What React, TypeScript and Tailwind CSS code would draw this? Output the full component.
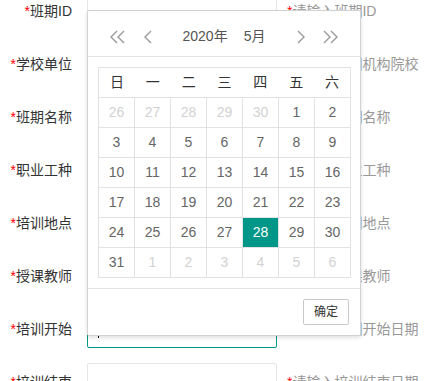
const rows = [
  { label: '班期ID', hint: '请输入班期ID' },
  { label: '学校单位', hint: '请输入培训机构院校' },
  { label: '班期名称', hint: '请输入班期名称' },
  { label: '职业工种', hint: '请输入职业工种' },
  { label: '培训地点', hint: '请输入培训地点' },
  { label: '授课教师', hint: '请输入授课教师' },
  { label: '培训开始', hint: '请输入培训开始日期', focus: true },
  { label: '培训结束', hint: '请输入培训结束日期' },
];

const weekdays = ['日', '一', '二', '三', '四', '五', '六'];

// 2020-05 month view, starts from Sun 26 April
const days: { n: number; muted?: boolean }[] = [
  ...[26, 27, 28, 29, 30].map((n) => ({ n, muted: true })),
  ...Array.from({ length: 31 }, (_, i) => ({ n: i + 1 })),
  ...[1, 2, 3, 4, 5, 6].map((n) => ({ n, muted: true })),
];

function Chevron({ double, right }: { double?: boolean; right?: boolean }) {
  const w = double ? 18 : 10;
  return (
    <svg
      width={w}
      height="14"
      viewBox={`0 0 ${w} 14`}
      fill="none"
      stroke="#999"
      strokeWidth="1.4"
      style={right ? { transform: 'scaleX(-1)' } : undefined}
    >
      <polyline points="8,1 2,7 8,13" />
      {double && <polyline points="15,1 9,7 15,13" />}
    </svg>
  );
}

function DatePicker() {
  return (
    <div className="absolute left-[87px] top-[10px] z-10 w-[274px] rounded-[2px] border border-[#d2d2d2] bg-white shadow-[0_2px_4px_rgba(0,0,0,0.12)]">
      <div className="relative h-[46px] border-b border-[#e2e2e2] pt-[10px] text-center leading-[30px] text-[14px] text-[#555]">
        <span className="absolute left-[21px] top-[19px] flex">
          <Chevron double />
        </span>
        <span className="absolute left-[55px] top-[19px] flex">
          <Chevron />
        </span>
        <span className="mr-[16px]">2020年</span>
        <span>5月</span>
        <span className="absolute right-[54px] top-[19px] flex">
          <Chevron right />
        </span>
        <span className="absolute right-[21px] top-[19px] flex">
          <Chevron double right />
        </span>
      </div>
      <div className="p-[10px]">
        <div className="w-[253px] border-l border-t border-[#e2e2e2]">
          <div className="grid h-[30px] grid-cols-7 border-b border-r border-[#e2e2e2] text-[#333]">
            {weekdays.map((w) => (
              <div key={w} className="flex items-center justify-center">
                {w}
              </div>
            ))}
          </div>
          <div className="grid grid-cols-[repeat(7,36px)]">
            {days.map((d, i) => {
              const on = !d.muted && d.n === 28;
              return (
                <div
                  key={i}
                  className={`flex h-[30px] items-center justify-center border-b border-r border-[#e2e2e2] ${
                    on ? 'bg-[#009688] text-white' : d.muted ? 'text-[#d2d2d2]' : 'text-[#666]'
                  }`}
                >
                  {d.n}
                </div>
              );
            })}
          </div>
        </div>
      </div>
      <div className="flex h-[47px] justify-end border-t border-[#e2e2e2] pr-[11px] pt-[10px]">
        <button className="h-[26px] rounded-[2px] border border-[#c9c9c9] px-[10px] text-[12px] text-[#333]">
          确定
        </button>
      </div>
    </div>
  );
}

export default function App() {
  return (
    <div
      className="relative h-[381px] w-[432px] overflow-hidden bg-white text-[14px]"
      style={{ fontFamily: '"Liberation Sans", "Noto Sans CJK SC", sans-serif' }}
    >
      <div className="-mt-[8px]">
        {rows.map((r) => (
          <div key={r.label} className="mb-[15px] flex h-[38px] items-center">
            <label className="w-[72px] shrink-0 text-right leading-5 text-[#333]">
              <span className="text-[#ff0000]">*</span>
              {r.label}
            </label>
            <div
              className={`ml-[15px] flex h-[38px] w-[190px] shrink-0 items-center rounded-[2px] border bg-white ${
                r.focus ? 'border-[#009688]' : 'border-[#e6e6e6]'
              }`}
            >
              {r.focus && <span className="ml-[10px] h-[17px] w-px bg-black" />}
            </div>
            <div className="ml-[10px] whitespace-nowrap leading-5 text-[#999]">
              <span className="text-[#ff0000]">*</span>
              {r.hint}
            </div>
          </div>
        ))}
      </div>
      <DatePicker />
    </div>
  );
}
